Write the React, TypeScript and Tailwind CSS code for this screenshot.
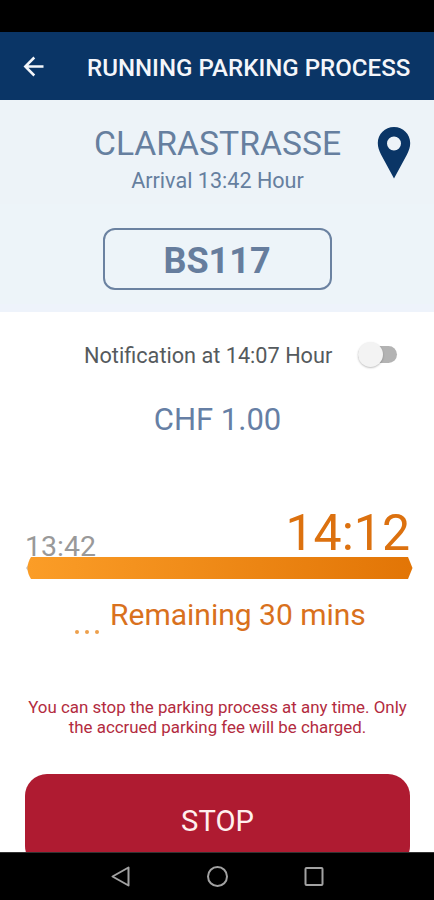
import React, { useState } from "react";

const Header = () => {
  return (
    <header className="flex h-[68px] shrink-0 items-center bg-[#0a3566] pl-[23px]">
      <button aria-label="Back" className="w-[64px]">
        <svg className="mt-px h-[21px] w-[21px]" viewBox="0 0 21 21" fill="none" stroke="#f4f6fa" strokeWidth={2.5}>
          <path d="M11.300 1.500L2.300 10.500l9 9M2.300 10.500H20.500" />
        </svg>
      </button>
      <h1 className="pt-[4px] text-[24.100px] font-medium whitespace-nowrap text-[#f4f6fa]">
        RUNNING PARKING PROCESS
      </h1>
    </header>
  );
};

const Location = () => {
  return (
    <section className="grid h-[104px] shrink-0 grid-cols-[74px_1fr_73px] bg-[#edf3f8] pt-[23px]">
      <span />
      <div className="text-center whitespace-nowrap text-[#667f9f]">
        <h2 className="pt-px text-[33.700px] leading-[40px]">CLARASTRASSE</h2>
        <p className="mt-[3px] text-[21.600px] leading-[28px]">Arrival 13:42 Hour</p>
      </div>
      <svg className="mt-[4px] ml-[16px] h-[52px] w-[34px]" viewBox="0 0 34 52" fill="#0a3566">
        <path
          fillRule="evenodd"
          d="M17 0C7.900 0 0.800 7 0.800 16C0.800 20 2 23.500 4 27.500L17 51.500L30 27.500C32 23.500 33.200 20 33.200 16C33.200 7 26.100 0 17 0ZM17 9.500A7 7 0 1 1 17 23.500A7 7 0 0 1 17 9.500Z"
        />
      </svg>
    </section>
  );
};

const Plate = () => {
  return (
    <section className="flex h-[108px] shrink-0 justify-center border-b-8 border-[#eef3fb] bg-[#edf4f9] pt-6">
      <div className="flex h-[62px] w-[229px] items-center justify-center rounded-[12px] border-2 border-[#6b82a1] pt-[3px] text-[36px] font-bold text-[#667d9d]">
        BS117
      </div>
    </section>
  );
};

const Notification = () => {
  const [enabled, setEnabled] = useState(false);

  return (
    <div className="mt-6 flex h-10 shrink-0 items-center pl-[84px]">
      <span className="w-[274px] text-[21.700px] whitespace-nowrap text-[#555a5d]">
        Notification at 14:07 Hour
      </span>
      <button
        role="switch"
        aria-checked={enabled}
        aria-label="Notification"
        className={`mb-[3px] flex h-[17px] w-[39px] items-center rounded-full bg-[#b3b3b3] ${enabled ? "justify-end" : ""}`}
        onClick={() => setEnabled(!enabled)}
      >
        <span className="h-[25px] w-[25px] rounded-full bg-[#f3f3f3] shadow-[0_1px_2px_rgba(0,0,0,0.25)]" />
      </button>
    </div>
  );
};

const Duration = () => {
  return (
    <section className="mt-[67px] shrink-0">
      <div className="flex h-[50px] items-end justify-between pr-[24px] pl-[25px]">
        <span className="text-[28.500px] leading-[20px] text-[#999999]">13:42</span>
        <span className="text-[50px] leading-[48px] text-[#dc710f]">14:12</span>
      </div>
      <svg className="ml-[26px] h-[22px] w-[387px]" viewBox="0 0 387 22">
        <defs>
          <linearGradient id="elapsed">
            <stop offset="0" stopColor="#fb9d27" />
            <stop offset="1" stopColor="#e27506" />
          </linearGradient>
        </defs>
        <path d="M5 4L0 11L5 18Z" fill="#c4c4c8" />
        <path d="M5 0H382L386.500 11L382 22H5C3 19 1.500 15 1.500 11S3 3 5 0Z" fill="url(#elapsed)" />
      </svg>
      <div className="flex h-[74px] items-center pl-[75px] whitespace-nowrap text-[#d9711d]">
        <span className="mt-[32px] flex w-[35px] gap-[6px]">
          <i className="h-[4px] w-[4px] rounded-full bg-[#eda04c]" />
          <i className="h-[4px] w-[4px] rounded-full bg-[#eda04c]" />
          <i className="h-[4px] w-[4px] rounded-full bg-[#eda04c]" />
        </span>
        <span className="pb-[3px] text-[30px]">Remaining 30 mins</span>
      </div>
    </section>
  );
};

const NavigationBar = () => {
  return (
    <nav className="flex h-12 shrink-0 items-center justify-center gap-[73px] border-t border-[#333333] bg-black">
      <svg className="h-6 w-6" viewBox="0 0 24 24" fill="none" stroke="#a2a2a2" strokeWidth={2}>
        <path d="M20.500 2.500V20.500L4.500 11.500Z" strokeLinejoin="round" />
      </svg>
      <svg className="h-6 w-6" viewBox="0 0 24 24" fill="none" stroke="#a2a2a2" strokeWidth={2}>
        <circle cx="12.500" cy="11.500" r="9.500" />
      </svg>
      <svg className="h-6 w-6" viewBox="0 0 24 24" fill="none" stroke="#a2a2a2" strokeWidth={2}>
        <rect x="3.500" y="3" width="17" height="17" rx="1" />
      </svg>
    </nav>
  );
};

const App = () => {
  return (
    <div className="flex h-[900px] w-[434px] flex-col overflow-hidden bg-white font-['Roboto',sans-serif]">
      <div className="h-[32px] shrink-0 bg-black" />
      <Header />
      <main className="flex min-h-0 flex-1 flex-col overflow-hidden">
        <Location />
        <Plate />
        <Notification />
        <p className="mt-6 h-10 shrink-0 pl-px text-center text-[31px] leading-[40px] text-[#667fa5]">
          CHF 1.00
        </p>
        <Duration />
        <p className="mt-[44px] shrink-0 pl-px text-center text-[16.900px] leading-[20px] whitespace-nowrap text-[#b32b40]">
          You can stop the parking process at any time. Only
          <br />
          the accrued parking fee will be charged.
        </p>
        <button className="mr-[24px] ml-[25px] mt-[37px] h-[94px] shrink-0 rounded-[22px] bg-[#af1b31] pt-[2px] text-[29.200px] text-[#fff0ee]">
          STOP
        </button>
      </main>
      <NavigationBar />
    </div>
  );
};

export default App;
